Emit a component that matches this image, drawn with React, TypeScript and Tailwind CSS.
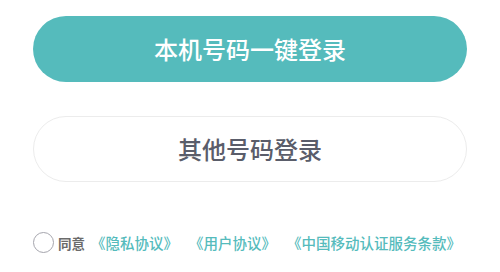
import React, { useState } from "react";

const cjk = { fontFamily: '"Noto Sans CJK SC", "Noto Sans", sans-serif' };

export default function App() {
  const [agreed, setAgreed] = useState(false);

  return (
    <div className="w-[500px] h-[272px] bg-white px-[33px] pt-[16px]" style={cjk}>
      {/* Login buttons */}
      <div className="flex flex-col gap-[34px]">
        <button className="h-[66px] w-full rounded-full bg-[#55bbbc] text-white text-[24px] font-medium leading-none">
          本机号码一键登录
        </button>
        <button className="h-[66px] w-full rounded-full border border-[#ececec] bg-white text-[#5a5d6a] text-[24px] font-medium leading-none">
          其他号码登录
        </button>
      </div>

      {/* Agreement */}
      <div className="mt-[50px] flex items-center">
        <button
          onClick={() => setAgreed(!agreed)}
          className="w-[21px] h-[21px] rounded-full border-[1.5px] border-[#a5a5ad] flex-shrink-0"
        />
        <span className="ml-[4px] text-[13.5px] text-[#6b6b6b] font-semibold">同意</span>
        <div className="ml-[6px] flex items-center gap-[11px] text-[14.5px] text-[#55bbbc] font-medium">
          <a>《隐私协议》</a>
          <a>《用户协议》</a>
          <a>《中国移动认证服务条款》</a>
        </div>
      </div>
    </div>
  );
}
